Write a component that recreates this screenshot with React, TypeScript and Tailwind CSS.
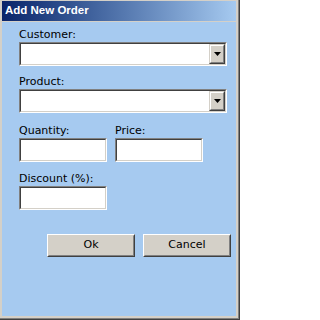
import React from 'react';

const label = "block h-[13px] leading-[13px] text-[11px] text-black";

function Sunken({ className = '', children }: { className?: string; children?: React.ReactNode }) {
  return (
    <div className={`border border-t-[#808080] border-l-[#808080] border-b-white border-r-white ${className}`}>
      <div className="h-full border border-t-[#404040] border-l-[#404040] border-b-[#d4d0c8] border-r-[#d4d0c8] bg-white flex">
        {children}
      </div>
    </div>
  );
}

function Combo() {
  return (
    <Sunken className="w-[208px] h-[24px]">
      <div className="flex-1" />
      <div className="w-[16px] h-full border border-t-[#d4d0c8] border-l-[#d4d0c8] border-b-[#404040] border-r-[#404040]">
        <div className="h-full bg-[#d4d0c8] border border-t-white border-l-white border-b-[#808080] border-r-[#808080] flex items-center justify-center">
          <svg width="7" height="4" viewBox="0 0 7 4">
            <path d="M0 0h7L3.5 4z" fill="#000" />
          </svg>
        </div>
      </div>
    </Sunken>
  );
}

function Button({ text }: { text: string }) {
  return (
    <div className="w-[88px] h-[23px] border border-t-white border-l-white border-b-[#404040] border-r-[#404040]">
      <div className="h-full bg-[#d4d0c8] border border-t-[#d4d0c8] border-l-[#d4d0c8] border-b-[#808080] border-r-[#808080] flex items-center justify-center text-[11px] text-black">
        {text}
      </div>
    </div>
  );
}

export default function App() {
  return (
    <div className="w-[240px] h-[320px] bg-[#404040] pr-px pb-px flex" style={{ fontFamily: '"DejaVu Sans", Verdana, sans-serif' }}>
      <div className="flex-1 bg-[#808080] pr-px pb-px flex">
        <div className="flex-1 bg-[#d4d0c8] pl-[2px] pt-px pr-[2px] pb-[2px] flex flex-col">
          <div className="h-[20px] flex items-center pl-[3px] bg-gradient-to-r from-[#0a246a] to-[#a6caf0]">
            <span className="text-white font-bold text-[11.5px]" style={{ fontFamily: '"Liberation Sans", Arial, sans-serif' }}>Add New Order</span>
          </div>
          <div className="h-px bg-[#d4d0c8]" />
          <div className="flex-1 bg-[#a6caf0] pl-[17px] pt-[6px] flex flex-col">
            <span className={label}>Customer:</span>
            <div className="mt-px"><Combo /></div>
            <span className={`${label} mt-[9px]`}>Product:</span>
            <div className="mt-px"><Combo /></div>
            <div className="flex gap-[8px] mt-[11px]">
              <div className="flex flex-col">
                <span className={label}>Quantity:</span>
                <Sunken className="mt-px w-[88px] h-[24px]" />
              </div>
              <div className="flex flex-col">
                <span className={label}>Price:</span>
                <Sunken className="mt-px w-[88px] h-[24px]" />
              </div>
            </div>
            <span className={`${label} mt-[10px]`}>Discount (%):</span>
            <Sunken className="mt-px w-[88px] h-[24px]" />
            <div className="flex gap-[8px] mt-[24px] pl-[28px]">
              <Button text="Ok" />
              <Button text="Cancel" />
            </div>
          </div>
        </div>
      </div>
    </div>
  );
}
